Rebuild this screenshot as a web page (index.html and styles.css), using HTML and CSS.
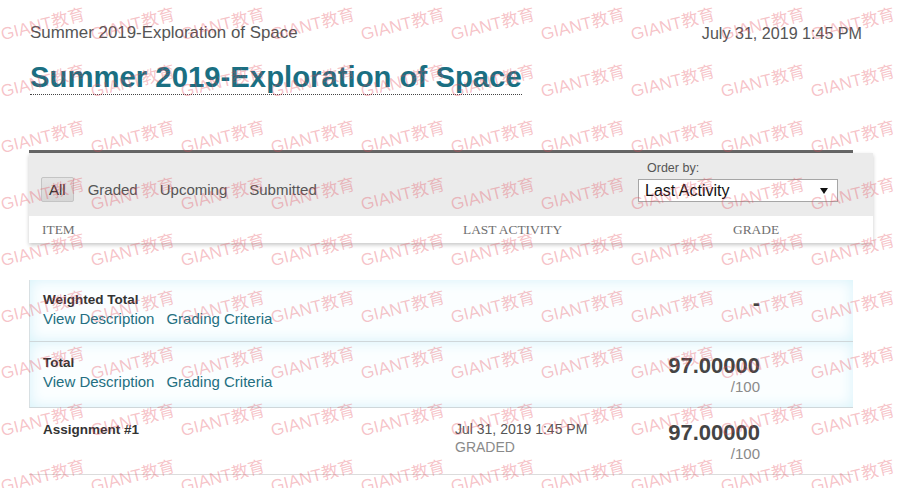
FILE: index.html
```html
<!DOCTYPE html>
<html lang="en">
<head>
<meta charset="utf-8">
<title>Summer 2019-Exploration of Space - Grades</title>
<link rel="stylesheet" href="styles.css">
</head>
<body>
<div class="page">
  <header class="topbar">
    <span class="course">Summer 2019-Exploration of Space</span>
    <span class="date">July 31, 2019 1:45 PM</span>
  </header>
  <h1 class="title"><span>Summer 2019-Exploration of Space</span></h1>

  <section class="grades">
    <div class="head">
      <div class="toolbar">
        <div class="filters">
          <button class="filter active">All</button>
          <button class="filter">Graded</button>
          <button class="filter">Upcoming</button>
          <button class="filter">Submitted</button>
        </div>
        <div class="order">
          <span class="order-label">Order by:</span>
          <div class="select">
            <span>Last Activity</span>
            <svg class="arrow" width="8" height="6" viewBox="0 0 8 6"><polygon points="0,0 8,0 4,6" fill="#111"/></svg>
          </div>
        </div>
      </div>
      <div class="colhead">
        <span class="c-item">ITEM</span>
        <span class="c-act">LAST ACTIVITY</span>
        <span class="c-grade">GRADE</span>
      </div>
    </div>

    <div class="rows">
      <div class="row calc first">
        <div class="item">
          <div class="name">Weighted Total</div>
          <div class="links"><a>View Description</a><a>Grading Criteria</a></div>
        </div>
        <div class="activity"></div>
        <div class="grade"><div class="score">-</div></div>
      </div>
      <div class="row calc">
        <div class="item">
          <div class="name">Total</div>
          <div class="links"><a>View Description</a><a>Grading Criteria</a></div>
        </div>
        <div class="activity"></div>
        <div class="grade"><div class="score">97.00000</div><div class="out">/100</div></div>
      </div>
      <div class="row plain">
        <div class="item">
          <div class="name">Assignment #1</div>
        </div>
        <div class="activity">
          <div class="when">Jul 31, 2019 1:45 PM</div>
          <div class="status">GRADED</div>
        </div>
        <div class="grade"><div class="score">97.00000</div><div class="out">/100</div></div>
      </div>
    </div>
  </section>

  <div class="watermark" aria-hidden="true">
    <span>GIANT教育</span><span>GIANT教育</span><span>GIANT教育</span><span>GIANT教育</span><span>GIANT教育</span><span>GIANT教育</span><span>GIANT教育</span><span>GIANT教育</span><span>GIANT教育</span><span>GIANT教育</span>
    <span>GIANT教育</span><span>GIANT教育</span><span>GIANT教育</span><span>GIANT教育</span><span>GIANT教育</span><span>GIANT教育</span><span>GIANT教育</span><span>GIANT教育</span><span>GIANT教育</span><span>GIANT教育</span>
    <span>GIANT教育</span><span>GIANT教育</span><span>GIANT教育</span><span>GIANT教育</span><span>GIANT教育</span><span>GIANT教育</span><span>GIANT教育</span><span>GIANT教育</span><span>GIANT教育</span><span>GIANT教育</span>
    <span>GIANT教育</span><span>GIANT教育</span><span>GIANT教育</span><span>GIANT教育</span><span>GIANT教育</span><span>GIANT教育</span><span>GIANT教育</span><span>GIANT教育</span><span>GIANT教育</span><span>GIANT教育</span>
    <span>GIANT教育</span><span>GIANT教育</span><span>GIANT教育</span><span>GIANT教育</span><span>GIANT教育</span><span>GIANT教育</span><span>GIANT教育</span><span>GIANT教育</span><span>GIANT教育</span><span>GIANT教育</span>
    <span>GIANT教育</span><span>GIANT教育</span><span>GIANT教育</span><span>GIANT教育</span><span>GIANT教育</span><span>GIANT教育</span><span>GIANT教育</span><span>GIANT教育</span><span>GIANT教育</span><span>GIANT教育</span>
    <span>GIANT教育</span><span>GIANT教育</span><span>GIANT教育</span><span>GIANT教育</span><span>GIANT教育</span><span>GIANT教育</span><span>GIANT教育</span><span>GIANT教育</span><span>GIANT教育</span><span>GIANT教育</span>
    <span>GIANT教育</span><span>GIANT教育</span><span>GIANT教育</span><span>GIANT教育</span><span>GIANT教育</span><span>GIANT教育</span><span>GIANT教育</span><span>GIANT教育</span><span>GIANT教育</span><span>GIANT教育</span>
    <span>GIANT教育</span><span>GIANT教育</span><span>GIANT教育</span><span>GIANT教育</span><span>GIANT教育</span><span>GIANT教育</span><span>GIANT教育</span><span>GIANT教育</span><span>GIANT教育</span><span>GIANT教育</span>
  </div>
</div>
</body>
</html>
```

FILE: styles.css
```css
* { box-sizing: border-box; }
html, body { margin: 0; padding: 0; }
body {
  font-family: "Liberation Sans", Arial, sans-serif;
  color: #555;
  background: #fff;
}
.page {
  position: relative;
  width: 898px;
  height: 488px;
  overflow: hidden;
}

/* top bar */
.topbar {
  display: flex;
  justify-content: space-between;
  align-items: center;
  padding: 23px 36px 0 30px;
  height: 43px;
  line-height: 20px;
}
.course { font-size: 16.9px; color: #555; }
.date { font-size: 16.1px; color: #555; }

.title {
  margin: 17px 0 0 30px;
  font-size: 29.3px;
  line-height: 34px;
  font-weight: bold;
  color: #1a6f82;
}
.title span { border-bottom: 1px dotted #444; padding-bottom: 1px; }

/* grades panel */
.grades {
  margin: 56px 0 0 29px;
  width: 824px;
  border-top: 3px solid #666;
}
.head {
  margin-right: -20px;
  box-shadow: 0 2px 4px rgba(0, 0, 0, 0.22);
}
.toolbar {
  background: #ebebeb;
  display: flex;
  justify-content: space-between;
  align-items: flex-end;
  height: 63px;
  padding: 9px 35px 14px 12px;
}
.filters { display: flex; gap: 6px; }
.filter {
  font-family: inherit;
  font-size: 15px;
  line-height: 23px;
  padding: 0 7px;
  margin: 0;
  border: 1px solid transparent;
  border-radius: 2px;
  background: none;
  color: #555;
}
.filter.active {
  background: linear-gradient(#e4e4e4, #d6d6d6);
  border-color: #c4c4c4;
  color: #333;
}
.order { display: flex; flex-direction: column; }
.order-label {
  font-size: 12.5px;
  line-height: 15px;
  padding-left: 9px;
  margin-bottom: 3px;
  color: #555;
}
.select {
  width: 200px;
  height: 23px;
  border: 1px solid #a6a6a6;
  background: #fff;
  display: flex;
  align-items: center;
  justify-content: space-between;
  padding: 0 9px 0 6px;
  font-size: 16px;
  line-height: 20px;
  color: #111;
}
.colhead {
  background: #fff;
  height: 27px;
  display: flex;
  align-items: center;
  padding-left: 13px;
  font-family: "Liberation Serif", "Times New Roman", serif;
  font-size: 13.4px;
  color: #6f6f6f;
}
.c-item { width: 421px; }
.c-act { width: 270px; }

/* rows */
.rows { margin-top: 37px; }
.row {
  display: grid;
  grid-template-columns: 412px 1fr auto;
  min-height: 66px;
  padding: 12px 93px 8px 14px;
  border-bottom: 1px solid #dcdcdc;
}
.row.first { min-height: 62px; padding-top: 11px; }
.row.calc {
  background: #fbfeff;
  box-shadow: inset 0 0 14px #d6f2fa;
  border-left: 1px solid #d8e0e3;
  border-bottom-color: #cfd7da;
  padding-left: 13px;
}
.row.plain { min-height: 67px; padding-top: 12px; }
.row.plain .item { padding-top: 1px; }
.name {
  font-size: 13.5px;
  line-height: 18px;
  font-weight: bold;
  color: #333;
}
.links {
  display: flex;
  gap: 12px;
  font-size: 15px;
  line-height: 20px;
  color: #236f81;
}
.when { font-size: 14px; line-height: 18px; color: #555; }
.status { font-size: 14px; line-height: 19px; color: #8a8a8a; }
.grade { text-align: right; margin-top: -1px; }
.plain .grade { margin-top: 0; }
.score {
  font-size: 22px;
  line-height: 26px;
  font-weight: bold;
  color: #444;
}
.out { font-size: 15px; line-height: 16px; color: #8a8a8a; }

/* watermark overlay */
.watermark {
  position: absolute;
  left: -2px;
  top: -3px;
  width: 900px;
  display: grid;
  grid-template-columns: repeat(10, 90px);
  grid-auto-rows: 56.5px;
  place-items: center;
  pointer-events: none;
  z-index: 5;
}
.watermark span {
  white-space: nowrap;
  font-family: "Liberation Sans", "Noto Sans CJK SC", sans-serif;
  font-size: 17px;
  line-height: 20px;
  color: rgba(228, 70, 85, 0.33);
  transform: rotate(-14deg);
}
```
